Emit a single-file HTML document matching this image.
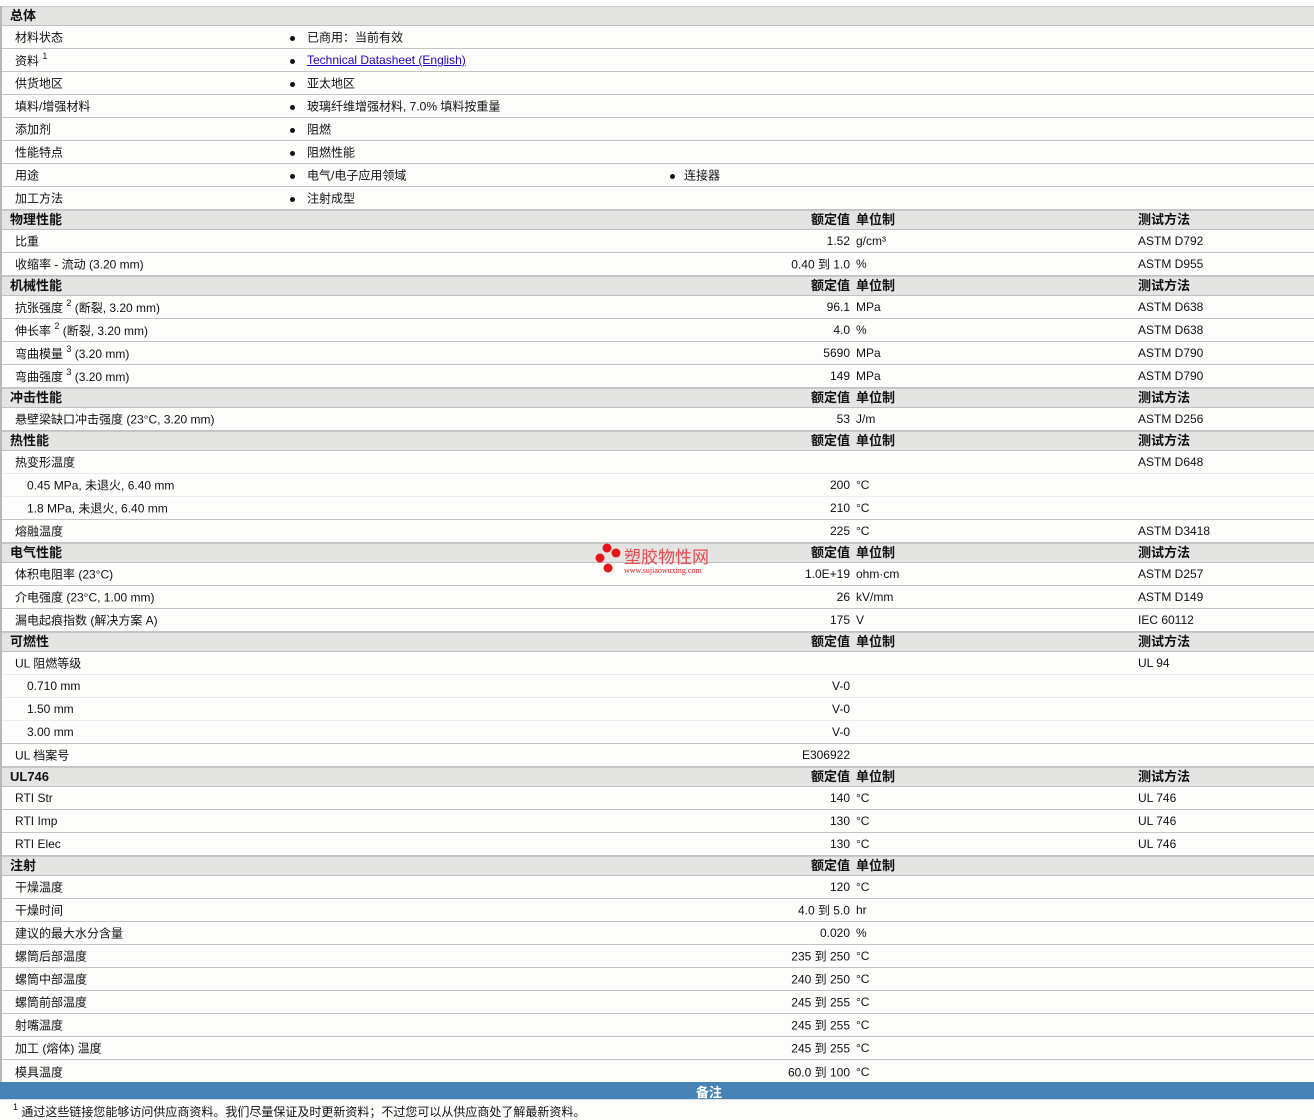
<!DOCTYPE html>
<html><head><meta charset="utf-8"><style>
*{margin:0;padding:0;box-sizing:border-box}
body{width:1314px;height:1119px;background:#fdfefc;font-family:"Liberation Sans","Noto Sans CJK SC",sans-serif;font-size:12px;color:#111;position:relative;overflow:hidden}
#wrap{position:absolute;left:0;top:6px;width:1314px;border-left:2px solid #b8b8b8}
.h{position:relative;height:20px;background:#e4e4e2;border-top:1px solid #c8c8c8;border-bottom:1px solid #c0c0c0;font-weight:bold;font-size:13px}
.r{position:relative;height:23px;border-bottom:1px solid #c4c4c4}
.r.s{border-bottom:1px solid #ececec}
.r span{position:absolute;top:50%;transform:translateY(-50%);white-space:nowrap}
.h span{position:absolute;top:0;line-height:17px;white-space:nowrap}
.h .l{left:8px}
.r .l{left:13px}
.r .l2{left:25px}
.b1{left:288px}.b2{left:668px}
.t1{left:305px}.t2{left:682px}
.v{right:464px}
.u{left:854px}
.m{left:1136px}
.h .v{right:464px}.h .u{left:854px}
.bul{display:inline-block;width:5px;height:5px;border-radius:50%;background:#111}
a{color:#2200cc;text-decoration:underline}
sup{font-size:9px;vertical-align:6px}
#blue{position:absolute;left:0;top:1082px;width:1314px;height:18px;background:#4682b4;color:#fff;font-weight:bold;font-size:13px;border-bottom:1px solid #ddd}
#blue span{position:absolute;left:696px;top:0}
#note{position:absolute;left:13px;top:1102px;font-size:12px}
#logo{position:absolute;left:594px;top:543px;width:130px;height:36px}
</style></head><body>
<div id="wrap">
<div class="h"><span class="l">总体</span></div>
<div class="r"><span class="l">材料状态</span><span class="b1"><i class="bul"></i></span><span class="t1">已商用：当前有效</span></div>
<div class="r"><span class="l">资料 <sup>1</sup></span><span class="b1"><i class="bul"></i></span><span class="t1"><a>Technical Datasheet (English)</a></span></div>
<div class="r"><span class="l">供货地区</span><span class="b1"><i class="bul"></i></span><span class="t1">亚太地区</span></div>
<div class="r"><span class="l">填料/增强材料</span><span class="b1"><i class="bul"></i></span><span class="t1">玻璃纤维增强材料, 7.0% 填料按重量</span></div>
<div class="r"><span class="l">添加剂</span><span class="b1"><i class="bul"></i></span><span class="t1">阻燃</span></div>
<div class="r"><span class="l">性能特点</span><span class="b1"><i class="bul"></i></span><span class="t1">阻燃性能</span></div>
<div class="r"><span class="l">用途</span><span class="b1"><i class="bul"></i></span><span class="t1">电气/电子应用领域</span><span class="b2"><i class="bul"></i></span><span class="t2">连接器</span></div>
<div class="r"><span class="l">加工方法</span><span class="b1"><i class="bul"></i></span><span class="t1">注射成型</span></div>

<div class="h"><span class="l">物理性能</span><span class="v">额定值</span><span class="u">单位制</span><span class="m">测试方法</span></div>
<div class="r"><span class="l">比重</span><span class="v">1.52</span><span class="u">g/cm³</span><span class="m">ASTM D792</span></div>
<div class="r"><span class="l">收缩率 - 流动 (3.20 mm)</span><span class="v">0.40 到 1.0</span><span class="u">%</span><span class="m">ASTM D955</span></div>

<div class="h"><span class="l">机械性能</span><span class="v">额定值</span><span class="u">单位制</span><span class="m">测试方法</span></div>
<div class="r"><span class="l">抗张强度 <sup>2</sup> (断裂, 3.20 mm)</span><span class="v">96.1</span><span class="u">MPa</span><span class="m">ASTM D638</span></div>
<div class="r"><span class="l">伸长率 <sup>2</sup> (断裂, 3.20 mm)</span><span class="v">4.0</span><span class="u">%</span><span class="m">ASTM D638</span></div>
<div class="r"><span class="l">弯曲模量 <sup>3</sup> (3.20 mm)</span><span class="v">5690</span><span class="u">MPa</span><span class="m">ASTM D790</span></div>
<div class="r"><span class="l">弯曲强度 <sup>3</sup> (3.20 mm)</span><span class="v">149</span><span class="u">MPa</span><span class="m">ASTM D790</span></div>

<div class="h"><span class="l">冲击性能</span><span class="v">额定值</span><span class="u">单位制</span><span class="m">测试方法</span></div>
<div class="r"><span class="l">悬壁梁缺口冲击强度 (23°C, 3.20 mm)</span><span class="v">53</span><span class="u">J/m</span><span class="m">ASTM D256</span></div>

<div class="h"><span class="l">热性能</span><span class="v">额定值</span><span class="u">单位制</span><span class="m">测试方法</span></div>
<div class="r s"><span class="l">热变形温度</span><span class="m">ASTM D648</span></div>
<div class="r s"><span class="l2">0.45 MPa, 未退火, 6.40 mm</span><span class="v">200</span><span class="u">°C</span></div>
<div class="r"><span class="l2">1.8 MPa, 未退火, 6.40 mm</span><span class="v">210</span><span class="u">°C</span></div>
<div class="r"><span class="l">熔融温度</span><span class="v">225</span><span class="u">°C</span><span class="m">ASTM D3418</span></div>

<div class="h"><span class="l">电气性能</span><span class="v">额定值</span><span class="u">单位制</span><span class="m">测试方法</span></div>
<div class="r"><span class="l">体积电阻率 (23°C)</span><span class="v">1.0E+19</span><span class="u">ohm·cm</span><span class="m">ASTM D257</span></div>
<div class="r"><span class="l">介电强度 (23°C, 1.00 mm)</span><span class="v">26</span><span class="u">kV/mm</span><span class="m">ASTM D149</span></div>
<div class="r"><span class="l">漏电起痕指数 (解决方案 A)</span><span class="v">175</span><span class="u">V</span><span class="m">IEC 60112</span></div>

<div class="h"><span class="l">可燃性</span><span class="v">额定值</span><span class="u">单位制</span><span class="m">测试方法</span></div>
<div class="r s"><span class="l">UL 阻燃等级</span><span class="m">UL 94</span></div>
<div class="r s"><span class="l2">0.710 mm</span><span class="v">V-0</span></div>
<div class="r s"><span class="l2">1.50 mm</span><span class="v">V-0</span></div>
<div class="r"><span class="l2">3.00 mm</span><span class="v">V-0</span></div>
<div class="r"><span class="l">UL 档案号</span><span class="v">E306922</span></div>

<div class="h"><span class="l">UL746</span><span class="v">额定值</span><span class="u">单位制</span><span class="m">测试方法</span></div>
<div class="r"><span class="l">RTI Str</span><span class="v">140</span><span class="u">°C</span><span class="m">UL 746</span></div>
<div class="r"><span class="l">RTI Imp</span><span class="v">130</span><span class="u">°C</span><span class="m">UL 746</span></div>
<div class="r"><span class="l">RTI Elec</span><span class="v">130</span><span class="u">°C</span><span class="m">UL 746</span></div>

<div class="h"><span class="l">注射</span><span class="v">额定值</span><span class="u">单位制</span></div>
<div class="r"><span class="l">干燥温度</span><span class="v">120</span><span class="u">°C</span></div>
<div class="r"><span class="l">干燥时间</span><span class="v">4.0 到 5.0</span><span class="u">hr</span></div>
<div class="r"><span class="l">建议的最大水分含量</span><span class="v">0.020</span><span class="u">%</span></div>
<div class="r"><span class="l">螺筒后部温度</span><span class="v">235 到 250</span><span class="u">°C</span></div>
<div class="r"><span class="l">螺筒中部温度</span><span class="v">240 到 250</span><span class="u">°C</span></div>
<div class="r"><span class="l">螺筒前部温度</span><span class="v">245 到 255</span><span class="u">°C</span></div>
<div class="r"><span class="l">射嘴温度</span><span class="v">245 到 255</span><span class="u">°C</span></div>
<div class="r"><span class="l">加工 (熔体) 温度</span><span class="v">245 到 255</span><span class="u">°C</span></div>
<div class="r" style="border-bottom:none"><span class="l">模具温度</span><span class="v">60.0 到 100</span><span class="u">°C</span></div>
</div>
<div id="blue"><span>备注</span></div>
<div id="note"><sup>1</sup> 通过这些链接您能够访问供应商资料。我们尽量保证及时更新资料；不过您可以从供应商处了解最新资料。</div>
<svg id="logo" viewBox="0 0 130 36">
<circle cx="13" cy="5" r="4.5" fill="#e8141c"/><circle cx="22" cy="10" r="4.5" fill="#e8141c"/>
<circle cx="6" cy="15" r="4.5" fill="#e8141c"/><circle cx="14" cy="25" r="4.5" fill="#e8141c"/>
<text x="30" y="20" font-size="17" fill="#e84a50" font-family="Noto Sans CJK SC,sans-serif">塑胶物性网</text>
<text x="30" y="30" font-size="8" fill="#e8141c" font-family="Liberation Serif,serif">www.sujiaowuxing.com</text>
</svg>
</body></html>
